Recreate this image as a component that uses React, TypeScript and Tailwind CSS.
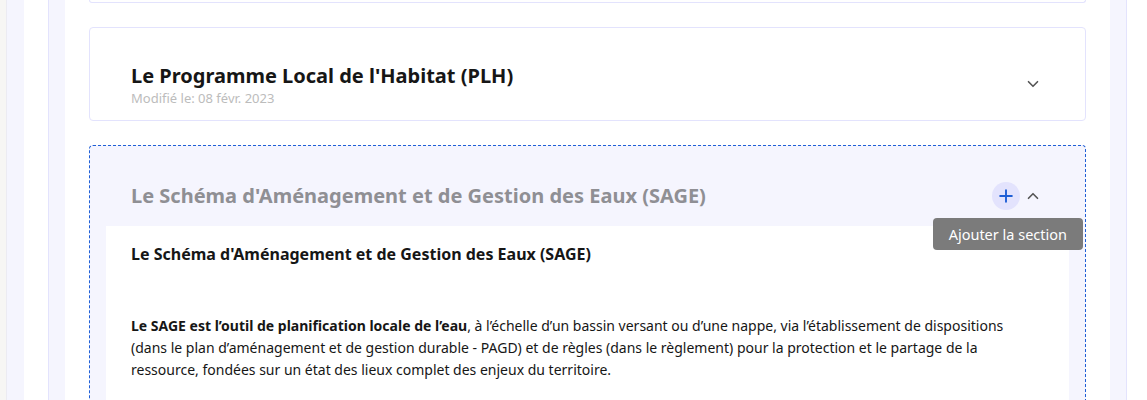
import { ChevronDown, ChevronUp, Plus } from 'lucide-react'

const font = { fontFamily: '"Noto Sans", "Liberation Sans", sans-serif' }

function ClosedCard() {
  return (
    <div className="mt-6 rounded border border-[#e3e3fd] bg-white pl-[41px] pr-[43px] pt-[34px] pb-[14px] flex items-center justify-between">
      <div>
        <h2 className="text-[20px] leading-[28px] font-bold text-[#161616]">Le Programme Local de l'Habitat (PLH)</h2>
        <p className="text-[13px] leading-[16px] text-[#bcbcbc]">Modifié le: 08 févr. 2023</p>
      </div>
      <ChevronDown className="w-[18px] h-[18px] text-[#555]" strokeWidth={2.2} />
    </div>
  )
}

function OpenCard() {
  return (
    <div className="mt-6 rounded border border-dashed border-[#1f5fd6] bg-[#f5f5fe] px-4">
      <div className="relative flex items-center justify-between pl-[25px] pr-[27px] pt-[36px] pb-4">
        <h2 className="text-[20px] leading-[28px] font-bold text-[#8f8f94]">
          Le Schéma d'Aménagement et de Gestion des Eaux (SAGE)
        </h2>
        <div className="flex items-center gap-1">
          <button className="w-7 h-7 rounded-full bg-[#e3e3fd] flex items-center justify-center">
            <Plus className="w-5 h-5 text-[#1f5fd6]" strokeWidth={2.3} />
          </button>
          <ChevronUp className="w-[18px] h-[18px] text-[#555]" strokeWidth={2.2} />
        </div>
        {/* tooltip */}
        <div className="absolute right-[-14px] top-[72px] rounded bg-[#7b7b7b] px-4 py-[6px] text-[14.5px] leading-[20px] text-white">
          Ajouter la section
        </div>
      </div>
      <div className="bg-white px-[25px] pt-4 pb-10 text-[#161616]">
        <h3 className="text-[16px] leading-[24px] font-bold">Le Schéma d'Aménagement et de Gestion des Eaux (SAGE)</h3>
        <p className="mt-[49px] text-[14px] leading-[22px]">
          <strong>Le SAGE est l’outil de planification locale de l’eau</strong>, à l’échelle d’un bassin versant ou d’une nappe, via l’établissement de dispositions
          <br />
          (dans le plan d’aménagement et de gestion durable - PAGD) et de règles (dans le règlement) pour la protection et le partage de la
          <br />
          ressource, fondées sur un état des lieux complet des enjeux du territoire.
        </p>
      </div>
    </div>
  )
}

export default function App() {
  return (
    <div className="h-[400px] overflow-hidden flex bg-white" style={font}>
      <div className="w-[7px] bg-[#f7f6f4] border-r border-[#ecebf2]" />
      <div className="w-[17px] bg-[#f5f5fe]" />
      <div className="w-6 bg-white" />
      <div className="w-[17px] bg-[#f5f5fe] border-l border-[#e3e3fd]" />
      <main className="flex-1 bg-white px-6">
        <div className="h-[3px] rounded-b border border-t-0 border-[#e3e3fd]" />
        <ClosedCard />
        <OpenCard />
      </main>
      <div className="w-[17px] bg-[#f5f5fe] border-r border-[#e3e3fd]" />
      <div className="w-5 bg-white" />
    </div>
  )
}
